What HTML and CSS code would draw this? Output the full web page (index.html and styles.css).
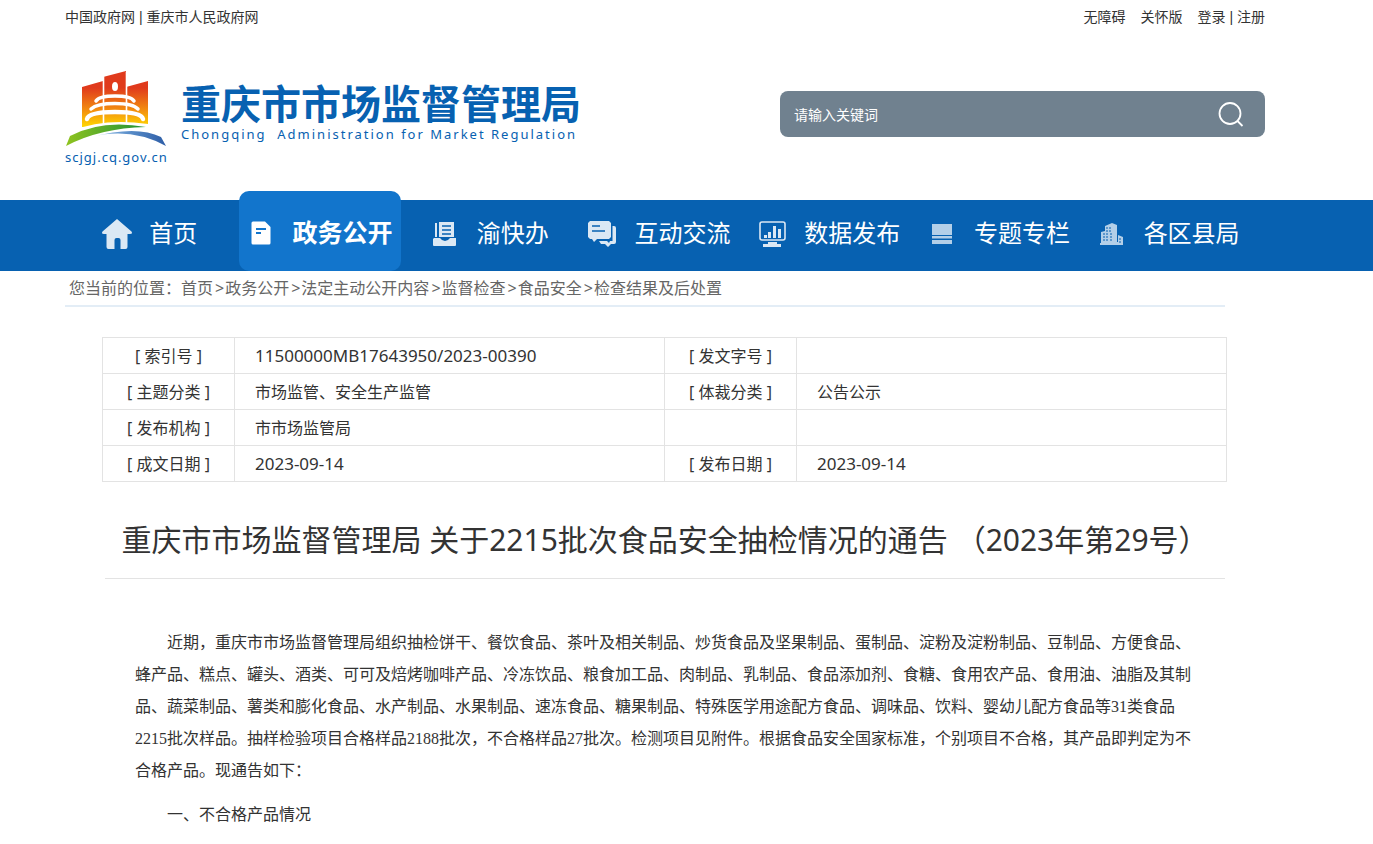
FILE: index.html
```html
<!DOCTYPE html>
<html lang="zh-CN">
<head>
<meta charset="utf-8">
<title>重庆市市场监督管理局</title>
<link rel="stylesheet" href="styles.css">
</head>
<body>
<header class="header">
  <div class="topbar">
    <div class="topbar-group"><a href="#">中国政府网</a> | <a href="#">重庆市人民政府网</a></div>
    <div class="topbar-group topbar-user"><a href="#">无障碍</a><a href="#">关怀版</a><span><a href="#">登录</a> | <a href="#">注册</a></span></div>
  </div>
  <div class="brand-row">
    <a class="brand" href="#">
      <span class="emblem">
        <svg width="102" height="78" viewBox="0 0 102 78" aria-hidden="true">
          <defs>
            <linearGradient id="wall" x1="0" y1="0" x2="0" y2="1"><stop offset="0.3" stop-color="#e03a1c"/><stop offset="0.68" stop-color="#f28a10"/><stop offset="1" stop-color="#ffd800"/></linearGradient>
            <linearGradient id="hill"><stop offset="0" stop-color="#8fc31f"/><stop offset="1" stop-color="#1f9236"/></linearGradient>
            <linearGradient id="river"><stop offset="0" stop-color="#a5cdec"/><stop offset="0.5" stop-color="#5b8fca"/><stop offset="1" stop-color="#2d5da6"/></linearGradient>
          </defs>
          <path fill="url(#wall)" d="M17 17 38 11V7L61 1V17L83 11V57H17Z"/>
          <path d="M38.500 6V57M61.500 2V57" stroke="#fff" stroke-width="1.600"/>
          <ellipse cx="50" cy="16.500" rx="3" ry="4.500" fill="#fff"/>
          <path fill="none" stroke="#fff" stroke-width="3.500" stroke-linecap="round" d="M31 31Q34 26 50 26T69 31M26 39Q32 33.500 50 33.500T73 39"/>
          <path fill="none" stroke="#fff" stroke-width="4.500" stroke-linecap="round" d="M22 49Q24 42 50 42T78 49"/>
          <path fill="#fff" d="M1 72 7 61Q38 48 83 54V60H1Z"/>
          <path fill="url(#hill)" d="M1 76 5 66Q37 49 81 57 35 58 1 76Z"/>
          <path fill="url(#river)" d="M26 67Q72 55 96 67L101 76Q66 57 26 67Z"/>
        </svg>
        <span class="domain">scjgj.cq.gov.cn</span>
      </span>
      <span class="brand-text">
        <span class="brand-cn">重庆市市场监督管理局</span>
        <span class="brand-en">Chongqing &nbsp;Administration for Market Regulation</span>
      </span>
    </a>
    <form class="search">
      <input type="text" aria-label="请输入关键词" placeholder="请输入关键词">
      <button type="button" aria-label="搜索">
        <svg width="26" height="26" viewBox="0 0 26 26" fill="none" stroke="#fff" stroke-width="1.800"><circle cx="12" cy="12.500" r="10.500"/><path d="M19 19.500 24.500 25"/></svg>
      </button>
    </form>
  </div>
</header>
<nav class="nav">
  <ul class="nav-list">
    <li><a href="#"><span class="icon"><svg width="30" height="30" viewBox="0 0 30 30" fill="#dbe8f4"><path d="M15 0 29.500 12.500Q31 15 28 15H25.500V28Q25.500 30 23.500 30H18.500V21Q18.500 19 16.500 19H14.500Q12.500 19 12.500 21V30H6.500Q4.500 30 4.500 28V15H2Q-1 15 .5 12.500Z"/></svg></span><span class="label">首页</span></a></li>
    <li><a class="active" href="#" aria-current="page"><span class="icon"><svg width="20" height="24" viewBox="0 0 20 24" fill="#fff"><path d="M2 .5H14L19.500 6V22Q19.500 23.500 18 23.500H2Q.5 23.500 .5 22V2Q.5 .5 2 .5Z"/><path d="M5 8H15M5 12H10" stroke="#1275cc" stroke-width="2"/></svg></span><span class="label">政务公开</span></a></li>
    <li><a href="#"><span class="icon"><svg width="24" height="25" viewBox="0 0 24 25" fill="#dbe8f4"><path d="M2 2H4V16H2ZM6 1H21V16H6ZM1 17H7Q9 20 12 20T17 17H23V24Q23 25 22 25H1Q0 25 0 24V18Z"/><path d="M9 5H18M9 9H18M9 13H18" stroke="#0761b1" stroke-width="1.500"/></svg></span><span class="label">渝快办</span></a></li>
    <li><a href="#"><span class="icon"><svg width="28" height="26" viewBox="0 0 28 26" fill="#dbe8f4"><path d="M2 0H21L23 2V16L21 18H9L6 21 4 18H2L0 16V2Z"/><path d="M24.500 5H26Q28 5 28 7V21Q28 23 26 23H23L20 26 17 23H13L11 20H19L21 22 22 20H24.500Z"/><path d="M4 5H12M4 10H17" stroke="#0761b1" stroke-width="1.500"/></svg></span><span class="label">互动交流</span></a></li>
    <li><a href="#"><span class="icon"><svg width="27" height="26" viewBox="0 0 27 26" fill="#dbe8f4"><rect x="1" y="1" width="25" height="18" rx="2" fill="none" stroke="#dbe8f4" stroke-width="1.600"/><path d="M5 14H8V17H5ZM9 11H12V17H9ZM14 5H17V17H14ZM19 8H22V17H19ZM9 21H18V23H22V26H4V23H9Z"/></svg></span><span class="label">数据发布</span></a></li>
    <li><a href="#"><span class="icon"><svg width="22" height="22" viewBox="0 0 22 22" fill="#b3cfe8"><path d="M1 1H21V12H1ZM1 13H21V15.500H1ZM1 17H21V21H1Z"/></svg></span><span class="label">专题专栏</span></a></li>
    <li><a href="#"><span class="icon"><svg width="24" height="22" viewBox="0 0 24 22" fill="#b3cfe8"><path d="M0 20H1V9L5 8V3L12 0 17 2V19H18V12L23 14V22H0Z"/><path d="M3 11H9M3 14H9M3 17H9M6 5H11M6 8H11M10 11H12M10 14H12M10 17H12M19 16H21M19 19H21" stroke="#0761b1" stroke-width="1" stroke-dasharray="2 1"/></svg></span><span class="label">各区县局</span></a></li>
  </ul>
</nav>
<main class="main">
  <div class="crumbs">您当前的位置：<a href="#">首页</a><span class="sep">&gt;</span><a href="#">政务公开</a><span class="sep">&gt;</span><a href="#">法定主动公开内容</a><span class="sep">&gt;</span><a href="#">监督检查</a><span class="sep">&gt;</span><a href="#">食品安全</a><span class="sep">&gt;</span><a href="#">检查结果及后处置</a></div>
  <table class="meta">
    <tbody>
      <tr><th scope="row">[ 索引号 ]</th><td class="num">11500000MB17643950/2023-00390</td><th scope="row">[ 发文字号 ]</th><td></td></tr>
      <tr><th scope="row">[ 主题分类 ]</th><td>市场监管、安全生产监管</td><th scope="row">[ 体裁分类 ]</th><td>公告公示</td></tr>
      <tr><th scope="row">[ 发布机构 ]</th><td>市市场监管局</td><td></td><td></td></tr>
      <tr><th scope="row">[ 成文日期 ]</th><td class="num">2023-09-14</td><th scope="row">[ 发布日期 ]</th><td class="num">2023-09-14</td></tr>
    </tbody>
  </table>
  <article class="article">
    <h1>重庆市市场监督管理局 关于2215批次食品安全抽检情况的通告 （2023年第29号）</h1>
    <div class="article-body">
      <p>近期，重庆市市场监督管理局组织抽检饼干、餐饮食品、茶叶及相关制品、炒货食品及坚果制品、蛋制品、淀粉及淀粉制品、豆制品、方便食品、蜂产品、糕点、罐头、酒类、可可及焙烤咖啡产品、冷冻饮品、粮食加工品、肉制品、乳制品、食品添加剂、食糖、食用农产品、食用油、油脂及其制品、蔬菜制品、薯类和膨化食品、水产制品、水果制品、速冻食品、糖果制品、特殊医学用途配方食品、调味品、饮料、婴幼儿配方食品等31类食品2215批次样品。抽样检验项目合格样品2188批次，不合格样品27批次。检测项目见附件。根据食品安全国家标准，个别项目不合格，其产品即判定为不合格产品。现通告如下：</p>
      <p>一、不合格产品情况</p>
    </div>
  </article>
</main>
</body>
</html>
```

FILE: styles.css
```css
* { box-sizing: border-box; }
body {
  margin: 0;
  background: #fff;
  color: #333;
  font-family: "Noto Sans", "Noto Sans CJK SC", sans-serif;
  font-size: 16px;
}
a { color: inherit; text-decoration: none; }
.header { padding: 0 108px 0 65px; }
.topbar {
  display: flex;
  justify-content: space-between;
  height: 34px;
  font-family: "Liberation Sans", "Noto Sans CJK SC", sans-serif;
  font-size: 14px;
  line-height: 34px;
}
.topbar-user { display: flex; gap: 15px; }
.brand-row {
  display: flex;
  justify-content: space-between;
  align-items: flex-start;
  height: 166px;
  padding-top: 36px;
}
.brand { display: flex; gap: 14px; color: #0761b1; }
.emblem { display: flex; flex-direction: column; width: 102px; }
.emblem svg { display: block; }
.domain { font-size: 13px; line-height: 18px; letter-spacing: 1px; white-space: nowrap; }
.brand-text { display: flex; flex-direction: column; padding-top: 10px; }
.brand-cn { font-family: "Noto Sans CJK SC", sans-serif; font-size: 40px; line-height: 44px; font-weight: 700; }
.brand-en { font-size: 13px; line-height: 20px; letter-spacing: 2px; }
.search {
  display: flex;
  align-items: center;
  width: 485px;
  height: 46px;
  margin-top: 21px;
  padding: 0 21px 0 14px;
  border-radius: 8px;
  background: #70818f;
}
.search input {
  flex: 1;
  min-width: 0;
  padding: 0;
  border: 0;
  outline: 0;
  background: none;
  color: #fff;
  font: inherit;
  font-size: 14px;
}
.search input::placeholder { color: #fff; opacity: 1; }
.search button { display: flex; padding: 0; border: 0; background: none; }
.nav { background: #0761b1; }
.nav-list {
  display: grid;
  grid-template-columns: repeat(7, 1fr);
  grid-template-rows: 71px;
  align-items: end;
  justify-items: center;
  margin: 0;
  padding: 0 120px 0 65px;
  list-style: none;
}
.nav a {
  display: flex;
  align-items: center;
  gap: 17px;
  height: 71px;
  padding-bottom: 4px;
  color: #fff;
  font-size: 24px;
  white-space: nowrap;
}
.nav .icon { display: flex; justify-content: center; width: 30px; }
.nav .label { padding-bottom: 4px; }
.nav .active {
  height: 80px;
  padding: 4px 8px 0 7px;
  border-radius: 10px;
  background: #1275cc;
  font-size: 25px;
  font-weight: 700;
}
.main { padding: 0 148px 0 65px; }
.crumbs {
  height: 36px;
  padding-left: 4px;
  border-bottom: 2px solid #e3edf6;
  color: #666;
  line-height: 34px;
}
.sep { padding: 0 1px 0 2px; }
.meta {
  width: calc(100% - 35px);
  margin: 30px 0 0 37px;
  border-collapse: collapse;
  table-layout: fixed;
}
.meta th, .meta td { height: 36px; padding: 0; border: 1px solid #e3e3e3; line-height: 24px; }
.meta th { width: 132px; font-weight: 400; }
.meta td { padding-left: 20px; }
.meta .num { font-size: 17px; }
.article { padding-left: 40px; }
.article h1 {
  margin: 0;
  padding: 36px 0 17px;
  border-bottom: 1px solid #e3e3e3;
  font-size: 30px;
  line-height: 43px;
  font-weight: 400;
  text-align: center;
  white-space: nowrap;
}
.article-body {
  padding: 48px 30px 0;
  font-family: "Liberation Serif", "Noto Sans CJK SC", serif;
  line-height: 32px;
}
.article-body p { margin: 0 0 12px; text-indent: 32px; }
```
